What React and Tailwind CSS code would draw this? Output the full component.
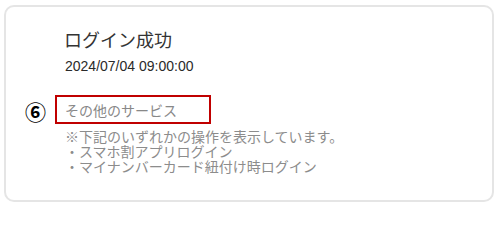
export default function App() {
    return (
        <div className="w-[500px] h-[207px] bg-white pt-[5px] pl-[4px] pr-[6px] pb-[5px]">
            <section className="h-[197px] border-2 border-[#e5e5e5] rounded-[10px] pl-[19px] pt-[20px] font-['Noto_Sans_CJK_JP',sans-serif]">
                {/* header */}
                <div className="ml-[40px]">
                    <h1 className="text-[18px] leading-[24px] text-[#333333] -ml-[1px]">ログイン成功</h1>
                    <p className="mt-[6px] text-[14px] leading-[18px] text-[#2a2a2a] font-['Liberation_Sans',sans-serif]">2024/07/04 09:00:00</p>
                </div>

                {/* other service */}
                <div className="mt-[20px] flex items-center">
                    <span className="w-[30px] text-[21px] leading-[24px] font-bold text-black pt-[3px]">⑥</span>
                    <div className="w-[156px] h-[29px] border-2 border-[#c00000] flex items-center pl-[8px]">
                        <span className="text-[14px] leading-[18px] text-[#888888]">その他のサービス</span>
                    </div>
                </div>

                <div className="ml-[40px] mt-[5px] text-[14px] leading-[15px] text-[#8c8c8c]">
                    <p>※下記のいずれかの操作を表示しています。</p>
                    <p>・スマホ割アプリログイン</p>
                    <p>・マイナンバーカード紐付け時ログイン</p>
                </div>
            </section>
        </div>
    )
}
